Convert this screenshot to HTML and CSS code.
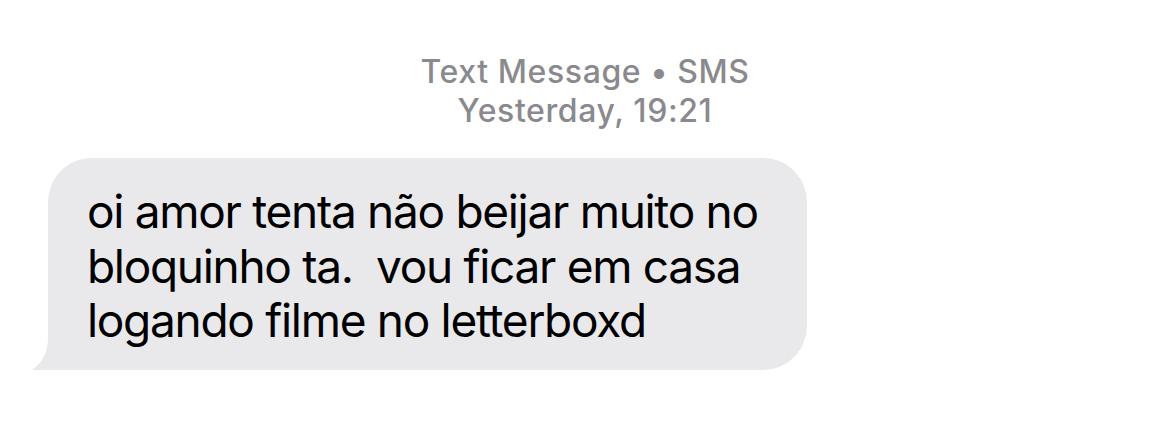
FILE: index.html
```html
<!DOCTYPE html>
<html>
<head>
<meta charset="utf-8">
<link rel="stylesheet" href="styles.css">
</head>
<body>
<div class="thread">
  <div class="meta">
    <div class="meta-line">Text Message • SMS</div>
    <div class="meta-line">Yesterday, 19:21</div>
  </div>
  <div class="row">
    <div class="bubble">
      <svg class="tail" width="60" height="44" viewBox="0 0 60 44" aria-hidden="true">
        <path d="M16 0 L16 12 C16 27 10 37 0 44 L60 44 L60 0 Z" fill="#e9e9eb"/>
      </svg>
      <p class="text">oi amor tenta não beijar muito no<br>bloquinho ta.&nbsp; vou ficar em casa<br>logando filme no letterboxd</p>
    </div>
  </div>
</div>
</body>
</html>
```
FILE: styles.css
```css
html, body {
  margin: 0;
  padding: 0;
  background: #ffffff;
}
body {
  width: 1170px;
  height: 421px;
  overflow: hidden;
  font-family: Inter, "Liberation Sans", sans-serif;
}
.thread {
  display: flex;
  flex-direction: column;
  padding-top: 52px;
}
.meta {
  display: flex;
  flex-direction: column;
  align-items: center;
  color: #8a8a8e;
  font-size: 32px;
  font-weight: 500;
  line-height: 39px;
  letter-spacing: 0.6px;
}
.row {
  display: flex;
  padding-left: 48px;
  margin-top: 28px;
}
.bubble {
  position: relative;
  width: 759px;
  box-sizing: border-box;
  background: #e9e9eb;
  border-radius: 44px;
  padding: 26px 20px 22px 39px;
}
.tail {
  position: absolute;
  left: -16px;
  bottom: 0;
}
.text {
  position: relative;
  margin: 0;
  color: #000000;
  font-size: 46px;
  line-height: 54.5px;
  font-weight: 400;
  letter-spacing: -1.3px;
  white-space: nowrap;
}
```
